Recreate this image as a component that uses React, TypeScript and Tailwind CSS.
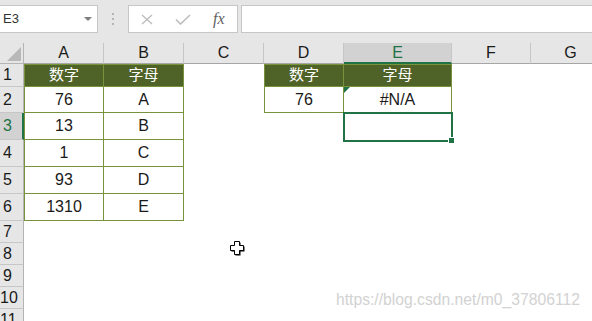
const cols = ['A', 'B', 'C', 'D', 'E', 'F', 'G'];
const rowHeights = ['h-[23px]', 'h-[26px]', 'h-[27px]', 'h-[27px]', 'h-[27px]', 'h-[27px]', 'h-[22px]', 'h-[22px]', 'h-[22px]', 'h-[22px]', 'h-[22px]'];

const values: Record<number, string[]> = {
  1: ['数字', '字母', '', '数字', '字母'],
  2: ['76', 'A', '', '76', '#N/A'],
  3: ['13', 'B'],
  4: ['1', 'C'],
  5: ['93', 'D'],
  6: ['1310', 'E'],
};

const inTable = (r: number, c: number) => (c <= 1 && r <= 6) || ((c === 3 || c === 4) && r <= 2);

const cellClass = (r: number, c: number) => {
  let cls = 'relative flex items-center justify-center';
  if (inTable(r, c)) {
    cls += ' border-b border-r border-[#77933c]';
    if (c === 0 || c === 3) cls += ' border-l';
    if (r === 1) cls += ' border-t bg-[#4f6228] text-white text-[15px]';
  }
  return cls;
};

const Cursor = () => (
  <svg className="absolute left-[230px] top-[241px]" width="15" height="15" viewBox="0 0 15 15">
    <polygon points="5.5,1.5 10.5,1.5 10.5,5.5 14.5,5.5 14.5,10.5 10.5,10.5 10.5,14.5 5.5,14.5 5.5,10.5 1.5,10.5 1.5,5.5 5.5,5.5" fill="#000" />
    <polygon points="4.5,0.5 9.5,0.5 9.5,4.5 13.5,4.5 13.5,9.5 9.5,9.5 9.5,13.5 4.5,13.5 4.5,9.5 0.5,9.5 0.5,4.5 4.5,4.5" fill="#fff" stroke="#000" strokeWidth="1" />
  </svg>
);

const App = () => {
  return (
    <div className="relative w-[592px] h-[321px] overflow-hidden bg-white font-['Liberation_Sans','Noto_Sans_CJK_SC',sans-serif] text-[#1a1a1a]">
      {/* formula bar */}
      <div className="flex items-start h-[43px] pt-[5px] bg-[#e6e6e6]">
        <div className="flex items-center justify-between w-[98px] h-[28px] bg-white border border-l-0 border-[#c6c6c6] pl-[3px] pr-[5px] text-[13px] text-[#333]">
          <span>E3</span>
          <svg width="8" height="4" viewBox="0 0 8 4"><polygon points="0,0 8,0 4,4" fill="#7f7f7f" /></svg>
        </div>
        <div className="flex flex-col items-center justify-center gap-[3px] w-[30px] h-[28px]">
          <span className="w-[2px] h-[2px] bg-[#b4b4b4]" />
          <span className="w-[2px] h-[2px] bg-[#b4b4b4]" />
          <span className="w-[2px] h-[2px] bg-[#b4b4b4]" />
        </div>
        <div className="flex items-center w-[110px] h-[28px] bg-white border border-[#c6c6c6] pl-[12px]">
          <svg width="12" height="11" viewBox="0 0 12 11">
            <path d="M1 1 L11 10 M11 1 L1 10" stroke="#bdbdbd" strokeWidth="1.4" fill="none" />
          </svg>
          <svg className="ml-[22px]" width="16" height="11" viewBox="0 0 16 11">
            <path d="M1 5.5 L5.5 10 L15 1" stroke="#bdbdbd" strokeWidth="1.6" fill="none" />
          </svg>
          <span className="ml-[22px] font-['Liberation_Serif',serif] italic text-[16px] text-[#5f5f5f] leading-none">fx</span>
        </div>
        <div className="flex-1 h-[28px] ml-[3px] -mr-px bg-white border border-[#c6c6c6]" />
      </div>

      {/* sheet */}
      <div className="grid grid-cols-[24px_80px_80px_80px_80px_108px_79px_80px] w-[611px] text-[16px]">
        <div className="relative h-[21px] bg-[#e6e6e6] border-r border-b border-[#b4b4b4]">
          <svg className="absolute left-[7px] top-[4px]" width="14" height="14" viewBox="0 0 14 14"><polygon points="14,0 14,14 0,14" fill="#b8b8b8" /></svg>
        </div>
        {cols.map((c) =>
          c === 'E' ? (
            <div key={c} className="flex items-center justify-center h-[21px] bg-[#d2d2d2] border-r border-r-[#c6c6c6] border-b-2 border-b-[#217346] text-[#217346]">{c}</div>
          ) : (
            <div key={c} className="flex items-center justify-center h-[21px] bg-[#e6e6e6] border-r border-r-[#c6c6c6] border-b border-b-[#a6a6a6]">{c}</div>
          )
        )}
        {rowHeights.map((h, i) => {
          const r = i + 1;
          return [
            <div
              key={`h${r}`}
              className={
                r === 3
                  ? `${h} flex items-center bg-[#d2d2d2] border-b border-b-[#c6c6c6] border-r-2 border-r-[#217346] text-[#217346]`
                  : `${h} flex items-center bg-[#e6e6e6] border-b border-b-[#c6c6c6] border-r border-r-[#b4b4b4]`
              }
            >
              <span className="w-[15px] text-center">{r}</span>
            </div>,
            ...cols.map((c, ci) => (
              <div key={`${c}${r}`} className={`${h} ${cellClass(r, ci)}`}>
                {r === 2 && ci === 4 && (
                  <svg className="absolute left-0 top-0" width="6" height="6" viewBox="0 0 6 6"><polygon points="0,0 6,0 0,6" fill="#217346" /></svg>
                )}
                {values[r]?.[ci] ?? ''}
              </div>
            )),
          ];
        })}
      </div>

      {/* selection of E3 */}
      <div className="absolute left-[343px] top-[112px] w-[110px] h-[30px] border-2 border-[#217346]" />
      <div className="absolute left-[448px] top-[137px] w-[7px] h-[7px] bg-[#217346] border border-white" />

      <Cursor />

      <div className="absolute left-[336px] top-[291px] text-[15.7px] leading-[18px] text-[#d2d2d2]">https://blog.csdn.net/m0_37806112</div>
    </div>
  );
};

export default App;
